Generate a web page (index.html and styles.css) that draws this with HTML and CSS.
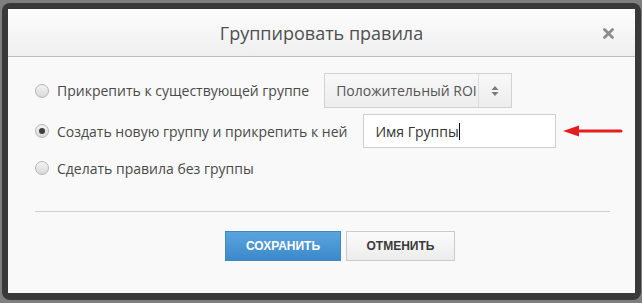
FILE: index.html
```html
<!DOCTYPE html>
<html lang="ru">
<head>
    <meta charset="UTF-8">
    <title>Группировать правила</title>
    <link rel="stylesheet" href="styles.css">
</head>
<body>
    <div class="frame">
        <div class="dialog">
            <div class="dialog-header">
                <span class="dialog-title">Группировать правила</span>
                <svg class="close-btn" width="11" height="11" viewBox="0 0 11 11">
                    <path d="M1.5 1.5 L9.5 9.5 M9.5 1.5 L1.5 9.5" stroke="#8c8c8c" stroke-width="2.8" stroke-linecap="round"/>
                </svg>
            </div>
            <div class="dialog-body">
                <div class="option-row row-select">
                    <label class="option"><input type="radio" name="grp" class="radio"> Прикрепить к существующей группе</label>
                    <div class="select-box">
                        <span class="select-text">Положительный ROI</span>
                        <span class="select-arrows">
                            <svg width="8" height="12" viewBox="0 0 8 12">
                                <path d="M4 1 L7.5 5 L0.5 5 Z M4 11 L7.5 7 L0.5 7 Z" fill="#7a7a7a"/>
                            </svg>
                        </span>
                    </div>
                </div>
                <div class="option-row row-input">
                    <label class="option"><input type="radio" name="grp" class="radio" checked> Создать новую группу и прикрепить к ней</label>
                    <div class="text-input">Имя Группы<span class="caret"></span></div>
                    <svg class="arrow" width="60" height="14" viewBox="0 0 60 14">
                        <path d="M14 7 L58 7" stroke="#e41e1e" stroke-width="3" stroke-linecap="round"/>
                        <path d="M0 7 L16 1.5 L16 12.5 Z" fill="#e41e1e"/>
                    </svg>
                </div>
                <div class="option-row row-plain">
                    <label class="option"><input type="radio" name="grp" class="radio"> Сделать правила без группы</label>
                </div>
                <div class="divider"></div>
                <div class="dialog-footer">
                    <button class="btn btn-save">СОХРАНИТЬ</button>
                    <button class="btn btn-cancel">ОТМЕНИТЬ</button>
                </div>
            </div>
        </div>
    </div>
</body>
</html>
```

FILE: styles.css
```css
body {
    margin: 0;
    background-color: #7f7f7f;
    font-family: "Open Sans", "Noto Sans", sans-serif;
}

.frame {
    width: 627px;
    margin: 3px 0 0 2px;
    padding: 6px 6px 7px 6px;
    background-color: #393939;
    border-radius: 8px;
}

.dialog {
    height: 284px;
    background-color: #f9f9f9;
}

.dialog-header {
    position: relative;
    height: 47px;
    display: flex;
    align-items: center;
    justify-content: center;
    background: linear-gradient(#fdfdfd, #efefef);
    border-bottom: 1px solid #bdbdbd;
}

.dialog-title {
    font-size: 18px;
    color: #4f4f4f;
    margin-top: 1px;
}

.close-btn {
    position: absolute;
    right: 21px;
    top: 19px;
}

.dialog-body {
    padding: 16px 25px 0 27px;
}

.option-row {
    display: flex;
    align-items: center;
}

.option-row > * {
    flex-shrink: 0;
}

.row-select {
    height: 35px;
}

.row-input {
    height: 34px;
    margin-top: 6px;
}

.row-plain {
    height: 20px;
    margin-top: 10px;
}

.option {
    display: flex;
    align-items: center;
    font-size: 14px;
    color: #4a4a4a;
    white-space: nowrap;
}

.radio {
    appearance: none;
    -webkit-appearance: none;
    width: 14px;
    height: 14px;
    margin: 0 8px 0 0;
    border: 1px solid #b5b5b5;
    border-radius: 50%;
    background: linear-gradient(#f4f4f4, #d9d9d9);
    position: relative;
}

.radio:checked::after {
    content: "";
    position: absolute;
    left: 3px;
    top: 3px;
    width: 6px;
    height: 6px;
    border-radius: 50%;
    background-color: #3d3d3d;
}

.select-box {
    display: flex;
    height: 33px;
    width: 186px;
    margin-left: 15px;
    border: 1px solid #d2d2d2;
    background: linear-gradient(#f8f8f8, #ededed);
    font-size: 14px;
    color: #555;
}

.select-text {
    flex: 1;
    padding-left: 11px;
    line-height: 33px;
    overflow: hidden;
    white-space: nowrap;
}

.select-arrows {
    width: 32px;
    border-left: 1px solid #dcdcdc;
    display: flex;
    align-items: center;
    justify-content: center;
}

.text-input {
    box-sizing: border-box;
    width: 193px;
    height: 34px;
    margin-left: 16px;
    padding-left: 11px;
    border: 1px solid #d0d0d0;
    background-color: #fff;
    font-size: 14px;
    color: #333;
    display: flex;
    align-items: center;
}

.caret {
    display: inline-block;
    width: 1px;
    height: 17px;
    background-color: #111;
}

.arrow {
    margin-left: 7px;
}

.divider {
    height: 1px;
    margin-top: 33px;
    background-color: #cfcfcf;
}

.dialog-footer {
    display: flex;
    justify-content: center;
    gap: 5px;
    padding-top: 19px;
    padding-left: 35px;
}

.btn {
    height: 30px;
    font-family: "Liberation Sans", Arial, sans-serif;
    font-weight: bold;
    font-size: 12px;
    cursor: pointer;
}

.btn-save {
    width: 116px;
    color: #fff;
    border: 1px solid #3f86c6;
    background: linear-gradient(#5ba5de, #3b88cb);
}

.btn-cancel {
    width: 109px;
    color: #3a3a3a;
    border: 1px solid #cacaca;
    background: linear-gradient(#fbfbfb, #ececec);
}
```
